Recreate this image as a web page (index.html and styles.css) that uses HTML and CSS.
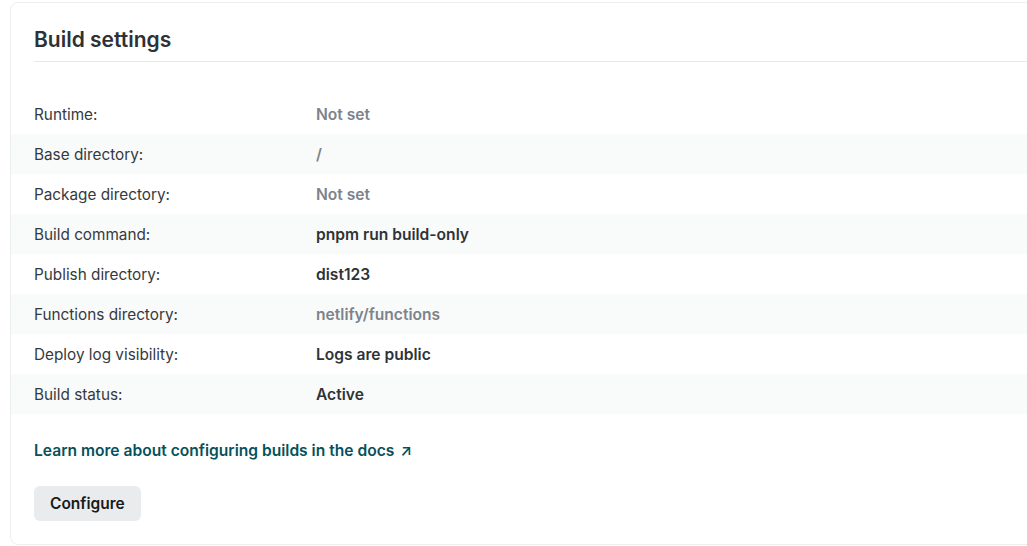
FILE: index.html
```html
<!DOCTYPE html>
<html lang="en">
<head>
<meta charset="utf-8">
<title>Build settings</title>
<link rel="stylesheet" href="styles.css">
</head>
<body>
<section class="card">
  <header class="card-header">
    <h2 class="card-title">Build settings</h2>
  </header>
  <dl class="settings">
    <div class="row"><dt>Runtime:</dt><dd class="muted">Not set</dd></div>
    <div class="row"><dt>Base directory:</dt><dd class="muted">/</dd></div>
    <div class="row"><dt>Package directory:</dt><dd class="muted">Not set</dd></div>
    <div class="row"><dt>Build command:</dt><dd>pnpm run build-only</dd></div>
    <div class="row"><dt>Publish directory:</dt><dd>dist123</dd></div>
    <div class="row"><dt>Functions directory:</dt><dd class="muted">netlify/functions</dd></div>
    <div class="row"><dt>Deploy log visibility:</dt><dd>Logs are public</dd></div>
    <div class="row"><dt>Build status:</dt><dd>Active</dd></div>
  </dl>
  <div class="card-footer">
    <a class="docs-link" href="#">Learn more about configuring builds in the docs<span class="arrow">↗</span></a>
    <button class="btn" type="button">Configure</button>
  </div>
</section>
</body>
</html>
```

FILE: styles.css
```css
html, body {
  margin: 0;
  padding: 0;
  background: #ffffff;
  overflow: hidden;
}
body {
  padding: 2px 0 0 10px;
  font-family: Inter, "Liberation Sans", sans-serif;
  color: #2f3337;
}
.card {
  width: 1040px;
  box-sizing: border-box;
  border: 1px solid #eceef0;
  border-radius: 8px;
  background: #ffffff;
  padding: 0 0 23px 0;
}
.card-header {
  margin-left: 23px;
  padding: 23px 0 7px 0;
  border-bottom: 1px solid #e6e8ea;
}
.card-title {
  margin: 0;
  font-size: 21px;
  line-height: 28px;
  font-weight: 600;
  color: #2d3135;
}
.settings {
  margin: 32px 0 0 0;
  padding: 0;
}
.row {
  display: grid;
  grid-template-columns: 282px 1fr;
  align-items: center;
  height: 40px;
  padding-left: 23px;
}
.row:nth-child(even) {
  background: #f9fafa;
}
.row dt {
  margin: 0;
  font-size: 15.3px;
  color: #35393e;
  font-weight: 400;
}
.row dd {
  margin: 0;
  font-size: 15.6px;
  font-weight: 600;
  color: #2f3337;
}
.row dd.muted {
  color: #7c838a;
}
.card-footer {
  padding: 25px 0 0 23px;
  display: flex;
  flex-direction: column;
  align-items: flex-start;
  gap: 23px;
}
.docs-link {
  font-size: 15.6px;
  line-height: 24px;
  font-weight: 600;
  color: #06515a;
  text-decoration: none;
}
.arrow {
  font-size: 15px;
  margin-left: 6px;
}
.btn {
  font-family: inherit;
  font-size: 15.5px;
  font-weight: 600;
  color: #181a1c;
  background: #e9ebed;
  border: none;
  border-radius: 6px;
  height: 35px;
  padding: 0 16px;
}
```
